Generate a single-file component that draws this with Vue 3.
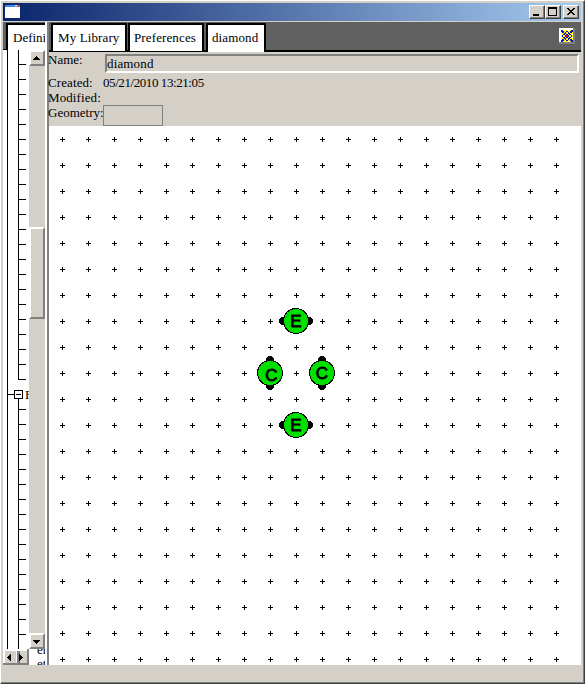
<script setup>
const tabs = [
  { label: 'My Library', w: 76 },
  { label: 'Preferences', w: 76 },
  { label: 'diamond', w: 60, active: true },
]
const range = (n, start, step) => Array.from({ length: n }, (_, i) => start + i * step)
const cols = range(20, 13, 26)
const rows = range(21, 13, 26)
const ticks = [...range(22, 14, 15), ...range(16, 359, 15)]
const nodes = [
  { t: 'E', x: 247, y: 195, side: true, dx: 0, dy: 0 },
  { t: 'C', x: 221, y: 247, side: false, dx: 1.5, dy: 2 },
  { t: 'C', x: 273, y: 247, side: false, dx: 0, dy: 0 },
  { t: 'E', x: 247, y: 299, side: true, dx: 0, dy: 0 },
]
// One quarter of the flower icon, mirrored on both axes
const quarter = ['bbyy.y', 'bbbyyb', 'ybbyby', 'yyybby', '.ybbyb', 'ybyybr']
const ink = { b: '#1010c0', y: '#ffff00', '.': '#fff', r: '#e00020' }
const flower = []
for (let y = 0; y < 12; y++) {
  for (let x = 0; x < 12; x++) {
    flower.push({ x: x + 2, y: y + 2, c: ink[quarter[Math.min(y, 11 - y)][Math.min(x, 11 - x)]] })
  }
}
</script>

<template>
  <div class="window">
    <header class="title">
      <svg class="app" width="15" height="13" shape-rendering="crispEdges">
        <rect width="15" height="13" fill="#fff" />
        <rect width="15" height="2" fill="#3d8ce0" />
        <rect x="10" width="2" height="1" fill="#fff" />
        <rect x="13" width="2" height="2" fill="#e04a28" />
      </svg>
      <div class="controls">
        <button><svg width="12" height="10"><rect x="2" y="7" width="6" height="2" /></svg></button>
        <button><svg width="12" height="10"><path d="M1 0h9v9h-9zM2 2v6h7v-6z" fill-rule="evenodd" /></svg></button>
        <button class="close"><svg width="12" height="10"><path d="M2 1h2v1h1v1h2v-1h1v-1h2v1h-1v1h-1v1h-1v1h1v1h1v1h1v1h-2v-1h-1v-1h-2v1h-1v1h-2v-1h1v-1h1v-1h1v-1h-1v-1h-1v-1h-1z" /></svg></button>
      </div>
    </header>

    <div class="body">
      <aside class="side">
        <div class="side-head"><div class="side-tab">Defini</div></div>
        <div class="side-mid">
          <svg class="tree" width="26" height="599" shape-rendering="crispEdges">
            <rect x="4" width="1" height="599" />
            <rect x="15" width="1" height="330" />
            <rect x="15" y="349" width="1" height="250" />
            <rect v-for="t in ticks" :key="t" x="15" :y="t" width="8" height="1" />
            <rect x="4" y="344" width="8" height="1" />
            <rect x="11.5" y="340.5" width="8" height="8" fill="#fff" stroke="#000" />
            <rect x="13" y="344" width="5" height="1" />
            <text x="22" y="349">F</text>
          </svg>
          <div class="vscroll">
            <div class="raised arrow"><svg width="12" height="12"><path d="M5 4h1v1h1v1h1v1h1v1h-7v-1h1v-1h1v-1h1z" /></svg></div>
            <div class="track"></div>
            <div class="raised thumb"></div>
            <div class="track grow"></div>
            <div class="raised arrow"><svg width="12" height="12"><path d="M2 5h7v1h-1v1h-1v1h-1v1h-1v-1h-1v-1h-1v-1h-1z" /></svg></div>
          </div>
        </div>
        <div class="side-foot">
          <svg width="42" height="16" shape-rendering="crispEdges">
            <rect width="42" height="16" fill="#fff" />
            <rect x="2" y="2" width="8" height="12" fill="#d4d0c8" />
            <rect x="10" y="2" width="3" height="12" fill="#d4d0c8" />
            <rect x="14" y="2" width="10" height="12" fill="#d4d0c8" />
            <rect x="14" y="2" width="3" height="12" fill="#808080" />
            <rect y="14" width="26" height="2" fill="#808080" />
            <rect x="24" width="2" height="16" fill="#808080" />
            <path d="M4 8h1v-1h1v-1h1v-1h1v7h-1v-1h-1v-1h-1v-1h-1zM16 5h1v1h1v1h1v1h1v1h-1v1h-1v1h-1v1h-1z" />
            <text x="34" y="5">er</text>
            <text x="34" y="19">et</text>
          </svg>
        </div>
      </aside>
      <div class="divider"></div>

      <main class="main">
        <nav class="tabs">
          <div v-for="t in tabs" :key="t.label" class="tab" :class="{ active: t.active }" :style="{ width: t.w + 'px' }">{{ t.label }}</div>
          <svg class="flower" width="16" height="16" shape-rendering="crispEdges">
            <rect width="16" height="16" fill="#808080" />
            <rect width="14" height="14" fill="#fff" />
            <rect v-for="(p, i) in flower" :key="i" :x="p.x" :y="p.y" width="1" height="1" :fill="p.c" />
          </svg>
        </nav>
        <section class="info">
          <div class="line name"><span class="label">Name:</span><div class="field">diamond</div></div>
          <div class="line created"><span class="label c">Created:</span><span class="date">05/21/2010 13:21:05</span></div>
          <div class="line mod"><span class="label m">Modified:</span></div>
          <div class="line geo"><span class="label g">Geometry:</span><div class="box"></div></div>
        </section>
        <svg class="canvas" width="532" height="539">
          <g shape-rendering="crispEdges">
            <template v-for="y in rows" :key="y">
              <path v-for="x in cols" :key="x" :d="`M${x - 2} ${y}h5v1h-5zM${x} ${y - 2}h1v5h-1z`" />
            </template>
          </g>
          <g v-for="(n, i) in nodes" :key="i" :transform="`translate(${n.x} ${n.y})`">
            <path :transform="n.side ? '' : 'rotate(90)'" d="M-17 -2H-16V-3H-15V-4H15V-3H16V-2H17V2H16V3H15V4H-15V3H-16V2H-17Z" shape-rendering="crispEdges" />
            <circle r="12.5" fill="#00e000" stroke="#000" shape-rendering="crispEdges" />
            <text class="glyph" :x="n.dx" :y="6 + n.dy" text-anchor="middle">{{ n.t }}</text>
          </g>
        </svg>
      </main>
    </div>
    <footer class="status"></footer>
  </div>
</template>

<style>
body { margin: 0; overflow: hidden; }
</style>

<style scoped>
* { box-sizing: border-box; }
.window {
  width: 585px; height: 684px; padding: 2px 1px 1px 2px; background: #d4d0c8;
  border: 1px solid #fff; border-right: 1px solid #404040; border-bottom: 1px solid #404040;
  box-shadow: inset -1px -1px #808080;
  display: flex; flex-direction: column; font: 13px "Liberation Serif", serif; color: #000;
}
.title { width: 578px; height: 18px; background: linear-gradient(90deg, #0a246a, #a6caf0); display: flex; justify-content: space-between; padding: 2px; }
.app { display: block; }
.controls { display: flex; }
button { width: 16px; height: 14px; padding: 1px; background: #d4d0c8; border: 1px solid; border-color: #fff #404040 #404040 #fff; box-shadow: inset -1px -1px #808080; display: flex; }
button svg { shape-rendering: crispEdges; }
.close { margin-left: 2px; }
.body { width: 578px; height: 643px; margin-top: 1px; display: flex; }
.side { width: 42px; display: flex; flex-direction: column; background: #fff; overflow: hidden; }
.side-head { height: 28px; background: #606060; padding: 1px 0 0 3px; border-bottom: 1px solid #000; }
.side-tab { height: 27px; width: 60px; background: #fff; border-left: 2px solid #000; border-top: 2px solid #000; padding-left: 5px; line-height: 25px; }
.side-mid { height: 599px; display: flex; }
.tree { display: block; overflow: hidden; flex: none; }
.vscroll { width: 16px; display: flex; flex-direction: column; }
.raised { background: #d4d0c8; border: 2px solid; border-color: #fff #808080 #808080 #fff; }
.arrow { height: 16px; }
.arrow svg { display: block; shape-rendering: crispEdges; }
.track { height: 161px; background: #d4d0c8; }
.thumb { height: 92px; }
.grow { height: auto; flex: 1; }
.side-foot { height: 16px; }
.side-foot svg { display: block; }
.divider { width: 4px; background: #808080; border-left: 2px solid #fff; }
.main { width: 532px; display: flex; flex-direction: column; }
.tabs { height: 30px; background: linear-gradient(#000, #000) bottom / 100% 2px no-repeat #606060; display: flex; padding: 1px 6px 0 2px; gap: 1px; }
.tab { height: 28px; border: 2px solid #000; border-bottom: 0; background: #fff; text-align: left; padding-left: 4px; line-height: 25px; letter-spacing: .12px; white-space: nowrap; }
.tab:first-child { padding-left: 5px; }
.tab.active { height: 29px; margin-left: 1px; }
.flower { margin: 5px 0 0 auto; }
.info { height: 74px; background: #d4d0c8; padding-top: 2px; }
.line { display: flex; white-space: nowrap; height: 15px; line-height: 13px; }
.label { width: 56px; margin-left: -1px; }
.line.name { height: 21px; line-height: 12px; }
.field { margin-left: 1px; width: 474px; height: 19px; border: 2px solid; border-color: #808080 #fff #fff #808080; line-height: 15px; letter-spacing: .15px; }
.created { margin-top: 1px; }
.label.c, .label.g { width: 55px; }
.label.c, .label.m { letter-spacing: .1px; }
.date { letter-spacing: -.42px; }
.box { width: 60px; height: 21px; border: 1px solid #808080; }
.geo .box { margin-top: -1px; }
.canvas { display: block; background: #fff; }
.glyph { font: 17px "Liberation Sans", sans-serif; stroke: #000; stroke-width: .8px; }
.status { flex: 1; }
</style>
